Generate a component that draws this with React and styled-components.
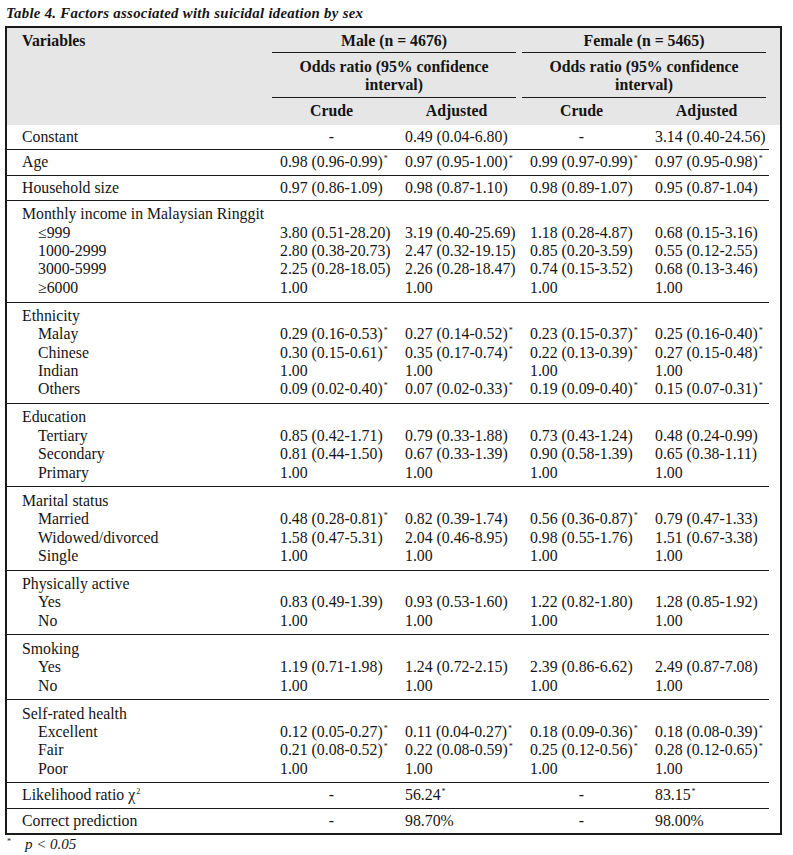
import React from 'react';
import styled, { createGlobalStyle } from 'styled-components';

const GlobalStyle = createGlobalStyle`
  html, body {
    margin: 0;
    padding: 0;
    background: #ffffff;
  }

  body {
    font-family: 'Liberation Serif', 'Times New Roman', serif;
    color: #141414;
  }
`;

const Page = styled.div`
  width: 793px;
  padding: 5px 0 0 5px;
  box-sizing: border-box;
`;

const Caption = styled.div`
  font-size: 14.8px;
  line-height: 16px;
  font-weight: bold;
  font-style: italic;
  letter-spacing: 0.3px;
  padding-left: 1px;
  margin-bottom: 5px;
`;

const Frame = styled.div`
  width: 777px;
  border: 2px solid #1a1a1a;
  box-sizing: border-box;
`;

const Table = styled.table`
  width: 100%;
  border-collapse: collapse;
  table-layout: fixed;
  font-size: 15.8px;
  line-height: 18.4px;
`;

const Head = styled.thead`
  background: #e6e6e6;
  font-weight: bold;
`;

const HeadCell = styled.th`
  padding: ${({ $pad }) => $pad || '4px 0 4px 0'};
  text-align: ${({ $align }) => $align || 'center'};
  vertical-align: top;
  font-weight: bold;
`;

const VarHead = styled(HeadCell)`
  padding-left: 15px;
`;

const GroupLabel = styled.div`
  margin: 0 ${({ $right }) => $right || 3}px 0 ${({ $left }) => $left || 3}px;
  padding: ${({ $pad }) => $pad || '4px 0 2px'};
  border-bottom: 1px solid #1a1a1a;
`;

const Row = styled.tr``;

const LabelCell = styled.td`
  padding: ${({ $top }) => $top}px 0 ${({ $bottom }) => $bottom}px
    ${({ $indent }) => ($indent ? 31 : 15)}px;
  border-bottom: ${({ $line }) => ($line ? '1px solid #1a1a1a' : 'none')};
  white-space: nowrap;
`;

const ValueCell = styled.td`
  padding: ${({ $top }) => $top}px 0 ${({ $bottom }) => $bottom}px
    ${({ $dash }) => ($dash ? 0 : 11)}px;
  text-align: ${({ $dash }) => ($dash ? 'center' : 'left')};
  border-bottom: ${({ $line }) => ($line ? '1px solid #1a1a1a' : 'none')};
  white-space: nowrap;
`;

const Spacer = styled.td`
  padding: 0;
`;

const Star = styled.sup`
  font-size: 8px;
  line-height: 0;
  vertical-align: 6px;
  margin-left: 1px;
`;

const Footnote = styled.div`
  display: flex;
  align-items: baseline;
  gap: 14px;
  padding: 1px 0 0 2px;
  font-size: 15px;
  line-height: 16px;
`;

const FootStar = styled.span`
  font-size: 8px;
  position: relative;
  top: -5px;
`;

const Italic = styled.span`
  font-style: italic;
`;

const sections = [
  { rows: [['Constant', '-', '0.49 (0.04-6.80)', '-', '3.14 (0.40-24.56)']] },
  {
    rows: [
      ['Age', '0.98 (0.96-0.99)*', '0.97 (0.95-1.00)*', '0.99 (0.97-0.99)*', '0.97 (0.95-0.98)*'],
    ],
  },
  {
    rows: [
      ['Household size', '0.97 (0.86-1.09)', '0.98 (0.87-1.10)', '0.98 (0.89-1.07)', '0.95 (0.87-1.04)'],
    ],
  },
  {
    title: 'Monthly income in Malaysian Ringgit',
    rows: [
      ['≤999', '3.80 (0.51-28.20)', '3.19 (0.40-25.69)', '1.18 (0.28-4.87)', '0.68 (0.15-3.16)'],
      ['1000-2999', '2.80 (0.38-20.73)', '2.47 (0.32-19.15)', '0.85 (0.20-3.59)', '0.55 (0.12-2.55)'],
      ['3000-5999', '2.25 (0.28-18.05)', '2.26 (0.28-18.47)', '0.74 (0.15-3.52)', '0.68 (0.13-3.46)'],
      ['≥6000', '1.00', '1.00', '1.00', '1.00'],
    ],
  },
  {
    title: 'Ethnicity',
    rows: [
      ['Malay', '0.29 (0.16-0.53)*', '0.27 (0.14-0.52)*', '0.23 (0.15-0.37)*', '0.25 (0.16-0.40)*'],
      ['Chinese', '0.30 (0.15-0.61)*', '0.35 (0.17-0.74)*', '0.22 (0.13-0.39)*', '0.27 (0.15-0.48)*'],
      ['Indian', '1.00', '1.00', '1.00', '1.00'],
      ['Others', '0.09 (0.02-0.40)*', '0.07 (0.02-0.33)*', '0.19 (0.09-0.40)*', '0.15 (0.07-0.31)*'],
    ],
  },
  {
    title: 'Education',
    rows: [
      ['Tertiary', '0.85 (0.42-1.71)', '0.79 (0.33-1.88)', '0.73 (0.43-1.24)', '0.48 (0.24-0.99)'],
      ['Secondary', '0.81 (0.44-1.50)', '0.67 (0.33-1.39)', '0.90 (0.58-1.39)', '0.65 (0.38-1.11)'],
      ['Primary', '1.00', '1.00', '1.00', '1.00'],
    ],
  },
  {
    title: 'Marital status',
    rows: [
      ['Married', '0.48 (0.28-0.81)*', '0.82 (0.39-1.74)', '0.56 (0.36-0.87)*', '0.79 (0.47-1.33)'],
      ['Widowed/divorced', '1.58 (0.47-5.31)', '2.04 (0.46-8.95)', '0.98 (0.55-1.76)', '1.51 (0.67-3.38)'],
      ['Single', '1.00', '1.00', '1.00', '1.00'],
    ],
  },
  {
    title: 'Physically active',
    rows: [
      ['Yes', '0.83 (0.49-1.39)', '0.93 (0.53-1.60)', '1.22 (0.82-1.80)', '1.28 (0.85-1.92)'],
      ['No', '1.00', '1.00', '1.00', '1.00'],
    ],
  },
  {
    title: 'Smoking',
    rows: [
      ['Yes', '1.19 (0.71-1.98)', '1.24 (0.72-2.15)', '2.39 (0.86-6.62)', '2.49 (0.87-7.08)'],
      ['No', '1.00', '1.00', '1.00', '1.00'],
    ],
  },
  {
    title: 'Self-rated health',
    rows: [
      ['Excellent', '0.12 (0.05-0.27)*', '0.11 (0.04-0.27)*', '0.18 (0.09-0.36)*', '0.18 (0.08-0.39)*'],
      ['Fair', '0.21 (0.08-0.52)*', '0.22 (0.08-0.59)*', '0.25 (0.12-0.56)*', '0.28 (0.12-0.65)*'],
      ['Poor', '1.00', '1.00', '1.00', '1.00'],
    ],
  },
  { rows: [['chi', '-', '56.24*', '-', '83.15*']] },
  { rows: [['Correct prediction', '-', '98.70%', '-', '98.00%']] },
];

const renderValue = value => {
  if (value.endsWith('*')) {
    return (
      <>
        {value.slice(0, -1)}
        <Star>*</Star>
      </>
    );
  }
  return value;
};

const renderLabel = label => {
  if (label === 'chi') {
    return (
      <>
        Likelihood ratio χ<Star>2</Star>
      </>
    );
  }
  return label;
};

const buildLines = section => {
  const lines = [];
  if (section.title) lines.push({ label: section.title, values: null, indent: false });
  section.rows.forEach(([label, ...values]) =>
    lines.push({ label, values, indent: Boolean(section.title) }),
  );
  return lines;
};

const Section = ({ section, isLast }) => {
  const lines = buildLines(section);
  const grouped = lines.length > 1;
  const pad = grouped ? 4.3 : 3;

  return (
    <tbody>
      {lines.map((line, index) => {
        const top = index === 0 ? pad : 0;
        const bottom = index === lines.length - 1 ? pad : 0;
        const hasLine = index === lines.length - 1 && !isLast;
        return (
          <Row key={line.label}>
            <LabelCell $top={top} $bottom={bottom} $indent={line.indent} $line={hasLine}>
              {renderLabel(line.label)}
            </LabelCell>
            {[0, 1, 2, 3].map(col => {
              const value = line.values ? line.values[col] : '';
              return (
                <ValueCell
                  key={col}
                  $top={top}
                  $bottom={bottom}
                  $dash={value === '-'}
                  $line={hasLine}
                >
                  {renderValue(value)}
                </ValueCell>
              );
            })}
            <Spacer />
          </Row>
        );
      })}
    </tbody>
  );
};

const App = () => (
  <>
    <GlobalStyle />
    <Page>
      <Caption>Table 4. Factors associated with suicidal ideation by sex</Caption>
      <Frame>
        <Table>
          <colgroup>
            <col style={{ width: 262 }} />
            <col style={{ width: 125 }} />
            <col style={{ width: 125 }} />
            <col style={{ width: 125 }} />
            <col style={{ width: 125 }} />
            <col style={{ width: 11 }} />
          </colgroup>
          <Head>
            <tr>
              <VarHead $align="left">Variables</VarHead>
              <HeadCell colSpan={2} $pad="0">
                <GroupLabel $left={0}>Male (n = 4676)</GroupLabel>
              </HeadCell>
              <HeadCell colSpan={2} $pad="0">
                <GroupLabel $right={0}>Female (n = 5465)</GroupLabel>
              </HeadCell>
              <HeadCell />
            </tr>
            <tr>
              <HeadCell />
              <HeadCell colSpan={2} $pad="0">
                <GroupLabel $left={0} $pad="3.5px 0 2px">
                  Odds ratio (95% confidence
                  <br />
                  interval)
                </GroupLabel>
              </HeadCell>
              <HeadCell colSpan={2} $pad="0">
                <GroupLabel $right={0} $pad="3.5px 0 2px">
                  Odds ratio (95% confidence
                  <br />
                  interval)
                </GroupLabel>
              </HeadCell>
              <HeadCell />
            </tr>
            <tr>
              <HeadCell />
              <HeadCell $pad="4px 0 4.6px">Crude</HeadCell>
              <HeadCell $pad="4px 0 4.6px">Adjusted</HeadCell>
              <HeadCell $pad="4px 0 4.6px">Crude</HeadCell>
              <HeadCell $pad="4px 0 4.6px">Adjusted</HeadCell>
              <HeadCell />
            </tr>
          </Head>
          {sections.map((section, index) => (
            <Section key={index} section={section} isLast={index === sections.length - 1} />
          ))}
        </Table>
      </Frame>
      <Footnote>
        <FootStar>*</FootStar>
        <Italic>p &lt; 0.05</Italic>
      </Footnote>
    </Page>
  </>
);

export default App;
